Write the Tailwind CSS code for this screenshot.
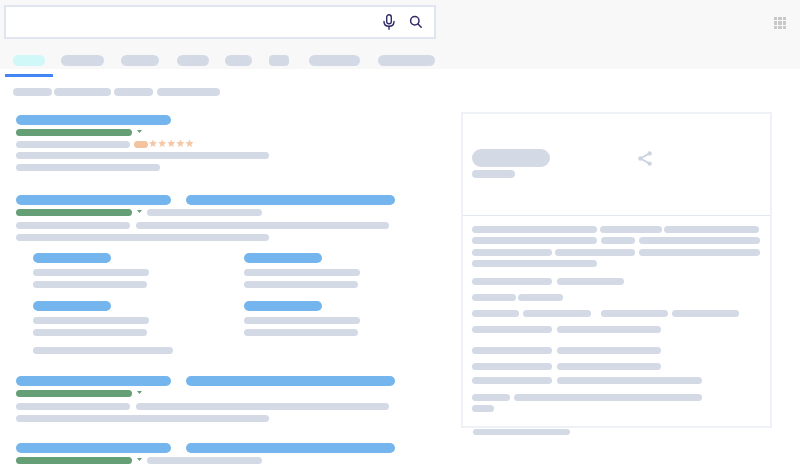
<!DOCTYPE html>
<html lang="en">
<head>
    <meta charset="UTF-8">
    <meta name="viewport" content="width=device-width, initial-scale=1.0">
    <title>Search results skeleton</title>
    <script src="https://cdn.jsdelivr.net/npm/@tailwindcss/browser@4"></script>
</head>
<body class="bg-white overflow-hidden">
    <div class="w-[800px] h-[467px] overflow-hidden blur-[0.4px]">
        <!-- Top bar -->
        <header class="flex justify-between h-[69px] bg-[#f8f8f8]">
            <div>
                <div class="flex items-center justify-end ml-[4px] mt-[5px] w-[432px] h-[34px] bg-white border-2 border-[#e0e5f0]">
                    <svg class="w-[14px] h-[16px] mr-[13px]" viewBox="0 0 14 16" fill="none" stroke="#2f2b66" stroke-width="1.4" stroke-linecap="round">
                        <rect x="4.7" y="0.8" width="4.6" height="9" rx="2.3"/>
                        <path d="M2 7.4c0 3 2.2 4.8 5 4.8s5-1.8 5-4.8"/>
                        <path d="M7 12.2v3"/>
                    </svg>
                    <svg class="w-[14px] h-[14px] mr-[11px]" viewBox="0 0 14 14" fill="none" stroke="#2f2b66" stroke-width="1.5" stroke-linecap="round">
                        <circle cx="5.8" cy="5.8" r="4.2"/>
                        <path d="M9 9l3.2 3.2"/>
                    </svg>
                </div>
                <div class="flex mt-[16px] h-[11px]">
                    <div class="ml-[13px] w-[32px] rounded-full bg-[#d0f8f8]"></div>
                    <div class="ml-[16px] w-[43px] rounded-full bg-[#d3dae6]"></div>
                    <div class="ml-[17px] w-[38px] rounded-full bg-[#d3dae6]"></div>
                    <div class="ml-[18px] w-[32px] rounded-full bg-[#d3dae6]"></div>
                    <div class="ml-[16px] w-[27px] rounded-full bg-[#d3dae6]"></div>
                    <div class="ml-[17px] w-[20px] rounded-[4px] bg-[#d3dae6]"></div>
                    <div class="ml-[20px] w-[51px] rounded-full bg-[#d3dae6]"></div>
                    <div class="ml-[18px] w-[57px] rounded-full bg-[#d3dae6]"></div>
                </div>
            </div>
            <div class="grid grid-cols-3 gap-[1px] w-[12px] h-[12px] mt-[17px] mr-[14px]">
                <div class="bg-[#c8c8c8]"></div><div class="bg-[#c8c8c8]"></div><div class="bg-[#c8c8c8]"></div>
                <div class="bg-[#c8c8c8]"></div><div class="bg-[#c8c8c8]"></div><div class="bg-[#c8c8c8]"></div>
                <div class="bg-[#c8c8c8]"></div><div class="bg-[#c8c8c8]"></div><div class="bg-[#c8c8c8]"></div>
            </div>
        </header>

        <div class="ml-[5px] mt-[5px] w-[48px] h-[3px] bg-[#4285f4]"></div>

        <!-- Filters -->
        <div class="flex h-[8px] mt-[11px] ml-[13px]">
            <div class="w-[39px] rounded-full bg-[#d3dae6]"></div>
            <div class="ml-[2px] w-[57px] rounded-full bg-[#d3dae6]"></div>
            <div class="ml-[3px] w-[39px] rounded-full bg-[#d3dae6]"></div>
            <div class="ml-[4px] w-[63px] rounded-full bg-[#d3dae6]"></div>
        </div>

        <main class="flex">
            <!-- Results -->
            <section class="w-[461px] pl-[16px] pt-[19px]">
                <div class="w-[155px] h-[10px] rounded-full bg-[#74b5ee]"></div>
                <div class="flex items-center mt-[4px] h-[7px]">
                    <div class="w-[116px] h-full rounded-full bg-[#659f76]"></div>
                    <svg class="ml-[5px] w-[5px] h-[3px] -mt-[2px]" viewBox="0 0 5 3"><polygon points="0,0 5,0 2.5,3" fill="#659f76"/></svg>
                </div>
                <div class="flex items-center mt-[5px] h-[7px]">
                    <div class="w-[114px] h-full rounded-full bg-[#d3dae6]"></div>
                    <div class="ml-[4px] w-[14px] h-full rounded-full bg-[#f3c3a0]"></div>
                    <svg class="ml-[1px] -mt-[2px] w-[45px] h-[9px]" viewBox="0 0 45 9" fill="#f5c7a6">
                        <polygon points="4,0.4 5.1,3.1 8,3.3 5.8,5.2 6.5,8.1 4,6.5 1.5,8.1 2.2,5.2 0,3.3 2.9,3.1"/>
                        <polygon transform="translate(9.2 0)" points="4,0.4 5.1,3.1 8,3.3 5.8,5.2 6.5,8.1 4,6.5 1.5,8.1 2.2,5.2 0,3.3 2.9,3.1"/>
                        <polygon transform="translate(18.3 0)" points="4,0.4 5.1,3.1 8,3.3 5.8,5.2 6.5,8.1 4,6.5 1.5,8.1 2.2,5.2 0,3.3 2.9,3.1"/>
                        <polygon transform="translate(27.4 0)" points="4,0.4 5.1,3.1 8,3.3 5.8,5.2 6.5,8.1 4,6.5 1.5,8.1 2.2,5.2 0,3.3 2.9,3.1"/>
                        <polygon transform="translate(36.5 0)" points="4,0.4 5.1,3.1 8,3.3 5.8,5.2 6.5,8.1 4,6.5 1.5,8.1 2.2,5.2 0,3.3 2.9,3.1"/>
                    </svg>
                </div>
                <div class="mt-[4px] w-[253px] h-[7px] rounded-full bg-[#d3dae6]"></div>
                <div class="mt-[5px] w-[144px] h-[7px] rounded-full bg-[#d3dae6]"></div>

                <div class="flex mt-[24px] h-[10px]">
                    <div class="w-[155px] rounded-full bg-[#74b5ee]"></div>
                    <div class="ml-[15px] w-[209px] rounded-full bg-[#74b5ee]"></div>
                </div>
                <div class="flex items-center mt-[4px] h-[7px]">
                    <div class="w-[116px] h-full rounded-full bg-[#659f76]"></div>
                    <svg class="ml-[5px] w-[5px] h-[3px] -mt-[2px]" viewBox="0 0 5 3"><polygon points="0,0 5,0 2.5,3" fill="#659f76"/></svg>
                    <div class="ml-[5px] w-[115px] h-full rounded-full bg-[#d3dae6]"></div>
                </div>
                <div class="flex mt-[6px] h-[7px]">
                    <div class="w-[114px] rounded-full bg-[#d3dae6]"></div>
                    <div class="ml-[6px] w-[253px] rounded-full bg-[#d3dae6]"></div>
                </div>
                <div class="mt-[5px] w-[253px] h-[7px] rounded-full bg-[#d3dae6]"></div>

                <!-- Sitelinks -->
                <div class="grid grid-cols-[211px_116px] ml-[17px] mt-[12px] gap-y-[13px]">
                    <div>
                        <div class="w-[78px] h-[10px] rounded-full bg-[#74b5ee]"></div>
                        <div class="mt-[6px] w-[116px] h-[7px] rounded-full bg-[#d3dae6]"></div>
                        <div class="mt-[5px] w-[114px] h-[7px] rounded-full bg-[#d3dae6]"></div>
                    </div>
                    <div>
                        <div class="w-[78px] h-[10px] rounded-full bg-[#74b5ee]"></div>
                        <div class="mt-[6px] w-[116px] h-[7px] rounded-full bg-[#d3dae6]"></div>
                        <div class="mt-[5px] w-[114px] h-[7px] rounded-full bg-[#d3dae6]"></div>
                    </div>
                    <div>
                        <div class="w-[78px] h-[10px] rounded-full bg-[#74b5ee]"></div>
                        <div class="mt-[6px] w-[116px] h-[7px] rounded-full bg-[#d3dae6]"></div>
                        <div class="mt-[5px] w-[114px] h-[7px] rounded-full bg-[#d3dae6]"></div>
                    </div>
                    <div>
                        <div class="w-[78px] h-[10px] rounded-full bg-[#74b5ee]"></div>
                        <div class="mt-[6px] w-[116px] h-[7px] rounded-full bg-[#d3dae6]"></div>
                        <div class="mt-[5px] w-[114px] h-[7px] rounded-full bg-[#d3dae6]"></div>
                    </div>
                </div>
                <div class="ml-[17px] mt-[11px] w-[140px] h-[7px] rounded-full bg-[#d3dae6]"></div>

                <div class="flex mt-[22px] h-[10px]">
                    <div class="w-[155px] rounded-full bg-[#74b5ee]"></div>
                    <div class="ml-[15px] w-[209px] rounded-full bg-[#74b5ee]"></div>
                </div>
                <div class="flex items-center mt-[4px] h-[7px]">
                    <div class="w-[116px] h-full rounded-full bg-[#659f76]"></div>
                    <svg class="ml-[5px] w-[5px] h-[3px] -mt-[2px]" viewBox="0 0 5 3"><polygon points="0,0 5,0 2.5,3" fill="#659f76"/></svg>
                </div>
                <div class="flex mt-[6px] h-[7px]">
                    <div class="w-[114px] rounded-full bg-[#d3dae6]"></div>
                    <div class="ml-[6px] w-[253px] rounded-full bg-[#d3dae6]"></div>
                </div>
                <div class="mt-[5px] w-[253px] h-[7px] rounded-full bg-[#d3dae6]"></div>

                <div class="flex mt-[21px] h-[10px]">
                    <div class="w-[155px] rounded-full bg-[#74b5ee]"></div>
                    <div class="ml-[15px] w-[209px] rounded-full bg-[#74b5ee]"></div>
                </div>
                <div class="flex items-center mt-[4px] h-[7px]">
                    <div class="w-[116px] h-full rounded-full bg-[#659f76]"></div>
                    <svg class="ml-[5px] w-[5px] h-[3px] -mt-[2px]" viewBox="0 0 5 3"><polygon points="0,0 5,0 2.5,3" fill="#659f76"/></svg>
                    <div class="ml-[5px] w-[115px] h-full rounded-full bg-[#d3dae6]"></div>
                </div>
            </section>

            <!-- Knowledge panel -->
            <aside class="pt-[16px]">
                <div class="w-[311px] h-[316px] border-2 border-[#eef1f7]">
                    <div class="flex h-[102px] pl-[9px] border-b border-[#e3e7f1]">
                        <div class="w-[166px] pt-[35px]">
                            <div class="w-[78px] h-[18px] rounded-[9px] bg-[#d3dae6]"></div>
                            <div class="mt-[3px] w-[43px] h-[8px] rounded-full bg-[#d3dae6]"></div>
                        </div>
                        <svg class="mt-[37px] w-[14px] h-[15px]" viewBox="0 0 14 15" fill="#ccd4e2">
                            <circle cx="2.4" cy="7.5" r="2.2"/>
                            <circle cx="11.6" cy="2.4" r="2.2"/>
                            <circle cx="11.6" cy="12.6" r="2.2"/>
                            <path d="M2.4 7.5L11.6 2.4M2.4 7.5L11.6 12.6" fill="none" stroke="#ccd4e2" stroke-width="1.8"/>
                        </svg>
                    </div>
                    <div class="pl-[9px]">
                        <div class="flex mt-[10px] h-[7px]">
                            <div class="w-[125px] rounded-full bg-[#d3dae6]"></div>
                            <div class="ml-[3px] w-[62px] rounded-full bg-[#d3dae6]"></div>
                            <div class="ml-[2px] w-[95px] rounded-full bg-[#d3dae6]"></div>
                        </div>
                        <div class="flex mt-[4px] h-[7px]">
                            <div class="w-[125px] rounded-full bg-[#d3dae6]"></div>
                            <div class="ml-[4px] w-[34px] rounded-full bg-[#d3dae6]"></div>
                            <div class="ml-[4px] w-[121px] rounded-full bg-[#d3dae6]"></div>
                        </div>
                        <div class="flex mt-[5px] h-[7px]">
                            <div class="w-[80px] rounded-full bg-[#d3dae6]"></div>
                            <div class="ml-[3px] w-[80px] rounded-full bg-[#d3dae6]"></div>
                            <div class="ml-[4px] w-[121px] rounded-full bg-[#d3dae6]"></div>
                        </div>
                        <div class="mt-[4px] w-[125px] h-[7px] rounded-full bg-[#d3dae6]"></div>

                        <div class="flex mt-[11px] h-[7px]">
                            <div class="w-[80px] rounded-full bg-[#d3dae6]"></div>
                            <div class="ml-[5px] w-[67px] rounded-full bg-[#d3dae6]"></div>
                        </div>
                        <div class="flex mt-[9px] h-[7px]">
                            <div class="w-[44px] rounded-full bg-[#d3dae6]"></div>
                            <div class="ml-[2px] w-[45px] rounded-full bg-[#d3dae6]"></div>
                        </div>
                        <div class="flex mt-[9px] h-[7px]">
                            <div class="w-[47px] rounded-full bg-[#d3dae6]"></div>
                            <div class="ml-[4px] w-[68px] rounded-full bg-[#d3dae6]"></div>
                            <div class="ml-[10px] w-[67px] rounded-full bg-[#d3dae6]"></div>
                            <div class="ml-[4px] w-[67px] rounded-full bg-[#d3dae6]"></div>
                        </div>
                        <div class="flex mt-[9px] h-[7px]">
                            <div class="w-[80px] rounded-full bg-[#d3dae6]"></div>
                            <div class="ml-[5px] w-[104px] rounded-full bg-[#d3dae6]"></div>
                        </div>

                        <div class="flex mt-[14px] h-[7px]">
                            <div class="w-[80px] rounded-full bg-[#d3dae6]"></div>
                            <div class="ml-[5px] w-[104px] rounded-full bg-[#d3dae6]"></div>
                        </div>
                        <div class="flex mt-[9px] h-[7px]">
                            <div class="w-[80px] rounded-full bg-[#d3dae6]"></div>
                            <div class="ml-[5px] w-[104px] rounded-full bg-[#d3dae6]"></div>
                        </div>
                        <div class="flex mt-[7px] h-[7px]">
                            <div class="w-[80px] rounded-full bg-[#d3dae6]"></div>
                            <div class="ml-[5px] w-[145px] rounded-full bg-[#d3dae6]"></div>
                        </div>
                        <div class="flex mt-[10px] h-[7px]">
                            <div class="w-[38px] rounded-full bg-[#d3dae6]"></div>
                            <div class="ml-[4px] w-[188px] rounded-full bg-[#d3dae6]"></div>
                        </div>
                        <div class="mt-[4px] w-[22px] h-[7px] rounded-full bg-[#d3dae6]"></div>
                    </div>
                </div>
                <div class="ml-[12px] mt-[1px] w-[97px] h-[6px] rounded-full bg-[#d3dae6]"></div>
            </aside>
        </main>
    </div>
</body>
</html>
